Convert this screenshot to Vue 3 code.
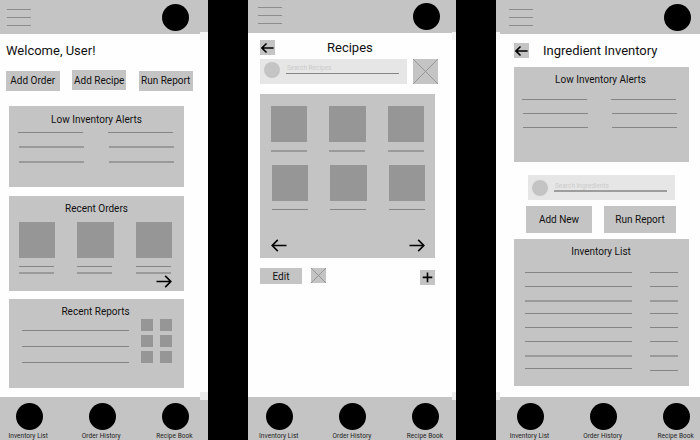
<script setup>
import { h } from 'vue'

const tabs = ['Inventory List', 'Order History', 'Recipe Book']

const Arrow = (props) =>
  h('svg', { viewBox: '0 0 16 13', class: ['arrow', { flip: props.left }] }, [
    h('path', {
      d: 'M0.5 6.5H14.6M9.2 0.9L14.8 6.5L9.2 12.1',
      fill: 'none',
      stroke: '#000',
      'stroke-width': 1.6,
      'vector-effect': 'non-scaling-stroke'
    })
  ])
Arrow.props = { left: Boolean }

const Crossed = () =>
  h('svg', { viewBox: '0 0 25 25', class: 'crossed' }, [
    h('path', { d: 'M0 0L25 25M25 0L0 25', stroke: '#8c8c8c', 'stroke-width': 0.8, 'vector-effect': 'non-scaling-stroke' })
  ])
</script>

<template>
  <div class="board">
    <section class="screen home">
      <header class="top">
        <div class="menu"><i /><i /><i /></div>
        <div class="dot" />
      </header>
      <main>
        <h1>Welcome, User!</h1>
        <div class="actions">
          <button><span>Add Order</span></button>
          <button><span>Add Recipe</span></button>
          <button><span>Run Report</span></button>
        </div>
        <div class="card alerts">
          <h2>Low Inventory Alerts</h2>
          <div class="columns">
            <div class="rules"><i /><i class="soft" /><i class="soft" /></div>
            <div class="rules"><i /><i class="soft" /><i class="soft" /></div>
          </div>
        </div>
        <div class="card orders">
          <h2>Recent Orders</h2>
          <div class="thumbs">
            <div v-for="n in 3" :key="n" class="thumb"><b /><i /><i class="soft" /></div>
          </div>
          <Arrow />
        </div>
        <div class="card reports">
          <h2>Recent Reports</h2>
          <div class="report-body">
            <div class="report-lines"><i /><i /><i /></div>
            <div class="tiles"><b v-for="n in 6" :key="n" /></div>
          </div>
        </div>
      </main>
      <footer>
        <div v-for="tab in tabs" :key="tab" class="tab"><div class="dot" /><span>{{ tab }}</span></div>
      </footer>
    </section>

    <section class="screen recipes">
      <header class="top">
        <div class="menu"><i /><i /><i /></div>
        <div class="dot" />
      </header>
      <main>
        <div class="heading">
          <div class="back"><Arrow left /></div>
          <h1>Recipes</h1>
        </div>
        <div class="search-row">
          <div class="search">
            <div class="lens" />
            <div class="field"><span>Search Recipes</span></div>
          </div>
          <Crossed />
        </div>
        <div class="card gallery">
          <div class="grid first">
            <div v-for="n in 3" :key="n" class="thumb"><b /><i class="soft" /></div>
          </div>
          <div class="grid second">
            <div v-for="n in 3" :key="n" class="thumb"><b /><i /></div>
          </div>
          <div class="pager"><Arrow left /><Arrow /></div>
        </div>
        <div class="tools">
          <button class="edit"><span>Edit</span></button>
          <Crossed />
          <div class="plus">
            <svg viewBox="0 0 15 15"><path d="M7.5 2.6V12.2M2.7 7.4H12.3" stroke="#000" stroke-width="1.6" /></svg>
          </div>
        </div>
      </main>
      <footer>
        <div v-for="tab in tabs" :key="tab" class="tab"><div class="dot" /><span>{{ tab }}</span></div>
      </footer>
    </section>

    <section class="screen inventory">
      <header class="top">
        <div class="menu"><i /><i /><i /></div>
        <div class="dot" />
      </header>
      <main>
        <div class="heading">
          <div class="back"><Arrow left /></div>
          <h1>Ingredient Inventory</h1>
        </div>
        <div class="card alerts">
          <h2>Low Inventory Alerts</h2>
          <div class="columns">
            <div class="rules"><i /><i /><i /></div>
            <div class="rules"><i /><i /><i /></div>
          </div>
        </div>
        <div class="search">
          <div class="lens" />
          <div class="field"><span>Search Ingredients</span></div>
        </div>
        <div class="actions">
          <button class="new"><span>Add New</span></button>
          <button class="run"><span>Run Report</span></button>
        </div>
        <div class="card list">
          <h2>Inventory List</h2>
          <div class="rows">
            <div v-for="n in 8" :key="n" class="row" :class="{ faint: n === 3 || n === 7, last: n === 8 }"><i /><i /></div>
          </div>
        </div>
      </main>
      <footer>
        <div v-for="tab in tabs" :key="tab" class="tab"><div class="dot" /><span>{{ tab }}</span></div>
      </footer>
    </section>
  </div>
</template>

<style>
body { background: #000; overflow: hidden; }
</style>

<style scoped>
* { box-sizing: border-box; }
.board {
  display: flex;
  gap: 40px;
  width: 700px;
  height: 440px;
  overflow: hidden;
  background: #000;
  font-family: Roboto, "Liberation Sans", sans-serif;
  color: #111;
}
.screen {
  flex: none;
  display: flex;
  flex-direction: column;
  width: 208px;
  height: 440px;
  background: #fefefe;
  position: relative;
}
.inventory { width: 204px; }
.screen::before, .screen::after {
  content: "";
  position: absolute;
  right: 0;
  top: 32px;
  width: 8px;
  height: 8px;
  background: #f5f5f5;
}
.screen::after { top: 392px; background: #ececec; }
.recipes::before, .recipes::after { width: 4px; }
.inventory::before, .inventory::after { right: auto; left: 0; width: 4px; }
h1, h2 { margin: 0; font-weight: 400; white-space: nowrap; }
h2 { font-size: 10px; line-height: 12px; text-align: center; }
i, b { display: block; flex: none; }
i { height: 1px; background: #858585; }
i.soft { height: 2px; background: #9a9a9a; }
b { background: #969696; }
button {
  display: flex;
  align-items: center;
  justify-content: center;
  padding: 0;
  border: 0;
  border-radius: 0;
  background: #c4c4c4;
  color: #111;
  font-family: inherit;
  font-size: 10px;
  line-height: 12px;
  white-space: nowrap;
}
.card { background: #c4c4c4; width: 175px; flex: none; }

.top {
  display: flex;
  justify-content: space-between;
  align-items: flex-start;
  flex: none;
  height: 34px;
  padding: 4px 18.7px 0 7px;
  background: #c4c4c4;
}
.recipes .top { height: 33px; padding: 3px 16px 0 10px; }
.inventory .top { padding: 4px 9px 0 13px; }
.menu { display: flex; flex-direction: column; gap: 7px; width: 24px; padding-top: 5px; }
.menu i { background: #8c8c8c; }
.recipes .menu { padding-top: 4px; }
.dot { width: 27px; height: 27px; border-radius: 50%; background: #000; flex: none; }
main { flex: 1; min-height: 0; display: flex; flex-direction: column; align-items: flex-start; }

footer {
  flex: none;
  display: flex;
  height: 43px;
  padding: 5.5px 0 0 1.7px;
  gap: 18.1px;
  background: #c4c4c4;
}
.recipes footer { padding-left: 4.3px; }
.inventory footer { padding-left: 7px; }
.tab { display: flex; flex-direction: column; align-items: center; width: 55px; flex: none; }
.tab span { margin: 2px 2px 0 0; font-size: 6.5px; line-height: 8px; letter-spacing: 0.05px; white-space: nowrap; color: #222; }

.home main { padding: 9px 0 0 9px; }
.home h1 { margin-left: -3px; font-size: 13px; line-height: 16px; }
.home .actions { display: flex; align-items: flex-start; gap: 12.5px; margin: 12px 0 0 -3.3px; }
.home .actions button { width: 54px; height: 20px; }
.home .actions button:nth-child(2) { margin-top: -1px; padding-top: 2px; }
.home .alerts { height: 81px; margin-top: 15px; padding-top: 8px; }
.columns { display: flex; gap: 24px; padding-left: 9px; margin-top: 6px; }
.rules { width: 66px; display: flex; flex-direction: column; gap: 13px; }
.rules i { width: 65px; margin-left: 1px; }
.rules i:first-child { margin-left: 0; }
.orders { display: flex; flex-direction: column; height: 95px; margin-top: 9px; padding-top: 7px; }
.thumbs { display: flex; gap: 22px; margin: 7px 0 0 10px; }
.thumb { width: 36.3px; }
.thumb b { width: 36.3px; height: 36px; }
.thumb i { width: 35px; }
.thumbs .thumb i { margin-top: 8px; }
.thumbs .thumb i.soft { margin-top: 5px; }
.arrow { display: block; width: 16px; height: 13px; flex: none; }
.flip { transform: scaleX(-1); }
.orders .arrow { align-self: flex-end; margin: 1px 12px 0 0; }
.reports { height: 89px; margin-top: 8px; padding-top: 7px; }
.reports h2 { padding-right: 2px; }
.report-body { display: flex; padding-left: 13px; margin-top: 1.4px; gap: 12px; }
.report-lines { display: flex; flex-direction: column; gap: 15px; width: 107px; padding-top: 10.6px; }
.tiles { display: grid; grid-template-columns: 12px 12px; gap: 4px 7px; }
.tiles b { height: 12px; }

.heading { display: flex; align-items: center; }
.back { display: flex; align-items: center; justify-content: center; width: 15px; height: 15px; background: #c4c4c4; }
.back .arrow { width: 13px; height: 12px; }
.recipes main { padding: 7px 0 0 12px; }
.recipes h1 { margin-left: 52px; font-size: 13px; line-height: 15px; }
.search-row { display: flex; gap: 6px; margin-top: 4px; }
.search { display: flex; width: 147px; height: 25px; background: #e6e6e6; }
.lens { width: 16px; height: 16px; margin: 3px 0 0 4px; border-radius: 50%; background: #c4c4c4; }
.field { width: 113px; height: 15px; margin-left: 6px; padding: 5px 0 0 1px; border-bottom: 1px solid #858585; font-size: 6.5px; line-height: 8px; color: #cbcbcb; white-space: nowrap; }
.crossed { display: block; width: 25px; height: 25px; background: #c4c4c4; }
.gallery { height: 164px; margin-top: 10px; padding: 12px 10px 0 11px; display: flex; flex-direction: column; }
.grid { display: flex; gap: 22.2px; }
.grid .thumb i { width: 36px; margin: 8px 0 0 0; }
.second { margin: 13px 0 0 1px; }
.pager { display: flex; justify-content: space-between; margin-top: 29px; }
.tools { display: flex; width: 175px; margin-top: 10px; }
.tools .edit { width: 42px; height: 16px; padding-top: 1px; }
.tools .crossed { width: 15px; height: 15px; margin-left: 9.4px; }
.plus { width: 15px; height: 15px; margin: 1.5px 0 0 auto; background: #c4c4c4; }
.plus svg { display: block; width: 15px; height: 15px; }

.inventory main { padding: 9px 0 0 17.5px; }
.inventory h1 { margin-left: 14.5px; font-size: 13px; line-height: 15px; }
.inventory .alerts { height: 95px; margin-top: 9px; padding-top: 7px; }
.inventory .alerts h2 { padding-right: 1px; }
.inventory .columns { margin-top: 13px; padding-left: 8.4px; gap: 23.6px; }
.inventory .search { margin: 13px 0 0 14.5px; }
.inventory .lens { margin-top: 5px; }
.inventory .field { height: 17px; padding-top: 7px; border-bottom: 2px solid #9d9d9d; }
.inventory .actions { display: flex; gap: 12px; margin: 6px 0 0 12.5px; }
.inventory .actions button { height: 27px; }
.new { width: 66px; }
.run { width: 72px; }
.list { height: 147px; margin-top: 6px; padding-top: 7px; }
.rows { margin-top: 14px; padding-left: 11px; }
.row { display: flex; gap: 18px; height: 13.75px; }
.row i:first-child { width: 107px; }
.row i:last-child { width: 28px; }
.row.faint i { height: 2px; background: #9a9a9a; }
.row.last i:last-child { margin-top: 2px; }
</style>
